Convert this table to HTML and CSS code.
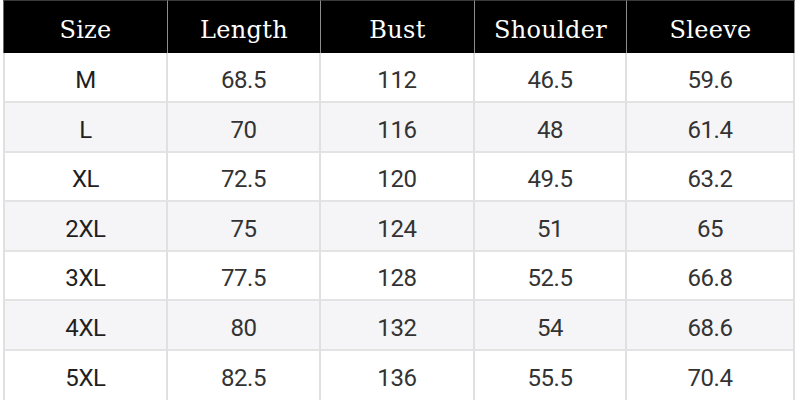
FILE: index.html
```html
<!DOCTYPE html>
<html lang="en">
<head>
<meta charset="utf-8">
<title>Size Chart</title>
<link rel="stylesheet" href="styles.css">
</head>
<body>
<table class="chart">
  <colgroup>
    <col class="c1"><col class="c2"><col class="c3"><col class="c4"><col class="c5">
  </colgroup>
  <thead>
    <tr class="head"><th>Size</th><th>Length</th><th>Bust</th><th>Shoulder</th><th>Sleeve</th></tr>
  </thead>
  <tbody>
    <tr class="r50"><td>M</td><td>68.5</td><td>112</td><td>46.5</td><td>59.6</td></tr>
    <tr class="r50 alt"><td>L</td><td>70</td><td>116</td><td>48</td><td>61.4</td></tr>
    <tr class="r49"><td>XL</td><td>72.5</td><td>120</td><td>49.5</td><td>63.2</td></tr>
    <tr class="r50 alt"><td>2XL</td><td>75</td><td>124</td><td>51</td><td>65</td></tr>
    <tr class="r49"><td>3XL</td><td>77.5</td><td>128</td><td>52.5</td><td>66.8</td></tr>
    <tr class="r50 alt"><td>4XL</td><td>80</td><td>132</td><td>54</td><td>68.6</td></tr>
    <tr class="r49"><td>5XL</td><td>82.5</td><td>136</td><td>55.5</td><td>70.4</td></tr>
  </tbody>
</table>
</body>
</html>
```
FILE: styles.css
```css
html, body {
  margin: 0;
  padding: 0;
  background: #ffffff;
  height: 400px;
  overflow: hidden;
}
.chart {
  margin-left: 3px;
  width: 792px;
  table-layout: fixed;
  border-collapse: separate;
  border-spacing: 0;
}
.c1 { width: 165px; }
.c2 { width: 153px; }
.c3 { width: 154px; }
.c4 { width: 152px; }
.c5 { width: 168px; }

.head th {
  height: 53px;
  box-sizing: border-box;
  padding: 6px 0 0 0;
  background: #000000;
  color: #ffffff;
  font-family: "DejaVu Serif", "Liberation Serif", serif;
  font-weight: normal;
  font-size: 24px;
  letter-spacing: 0.3px;
  text-align: center;
  vertical-align: middle;
  border-top: 1px solid #3a3a3a;
  border-right: 1px solid #8c8c8c;
}
.head th:first-child { border-left: 1px solid #6a6a6a; }

tbody td {
  box-sizing: border-box;
  padding: 5px 0 0 0;
  text-align: center;
  vertical-align: middle;
  font-family: Roboto, "Noto Sans", sans-serif;
  font-size: 24px;
  letter-spacing: -0.4px;
  color: #333333;
  border-right: 2px solid #e0e0e0;
  border-bottom: 2px solid #e3e3e3;
  background: #ffffff;
}
tbody td:first-child {
  border-left: 2px solid #e0e0e0;
  color: #1f1f1f;
}
tbody tr:last-child td { border-bottom: none; }
.r50 td { height: 50px; }
.r49 td { height: 49px; }
tbody tr.alt td { background: #f5f5f7; }
```
